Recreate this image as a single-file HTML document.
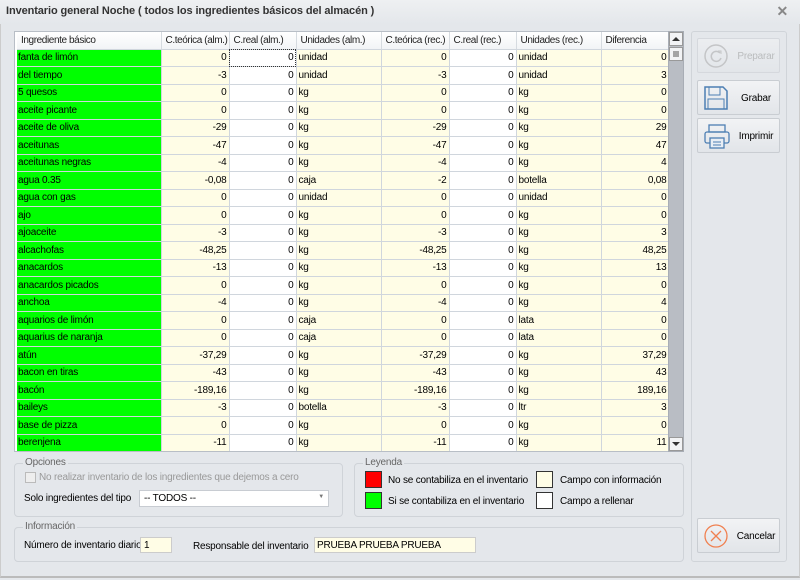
<!DOCTYPE html>
<html><head><meta charset="utf-8">
<style>
*{box-sizing:border-box;margin:0;padding:0}
body{width:800px;height:580px;overflow:hidden;background:#e4e7eb;font-family:"Liberation Sans",sans-serif;font-size:10px;letter-spacing:-0.2px;color:#000;position:relative}
.title{position:absolute;left:0;top:0;width:800px;height:24px;background:linear-gradient(#eef0f2,#e4e7eb);}
.title span{position:absolute;left:6px;top:5px;font-weight:bold;font-size:11px;color:#333;letter-spacing:-0.1px}
.title .x{position:absolute;right:12px;top:3px;font-size:14px;color:#888;font-weight:bold}
.win{position:absolute;left:0;top:24px;width:800px;height:554px;border-left:1px solid #ccc;border-right:1px solid #ccc;border-bottom:2px solid #bbb}
.grid{position:absolute;left:14px;top:31px;width:670px;height:421px;border:1px solid #b8bec6;background:#fff;overflow:hidden}
table{border-collapse:collapse;table-layout:fixed;position:absolute;left:2px;top:0;width:652px}
td,th{height:17.5px;border-right:1px solid #d0d6dd;border-bottom:1px solid #d0d6dd;padding:0 2px;white-space:nowrap;overflow:hidden;font-weight:normal;font-size:10px}
th{height:17px;background:linear-gradient(#fff,#f2f4f6);text-align:left;padding-left:4px;color:#222;border-right:1px solid #d6dbe0;letter-spacing:-0.4px}
td.g{background:#00ff00;padding-left:1px}
td.y{background:#fffde6}
td.w{background:#fff}
td.r{text-align:right}
.sb{position:absolute;left:668px;top:31px;width:16px;height:421px;background:#b9bdc4;border:1px solid #a8adb5}
.sb .a{position:absolute;left:0;width:14px;height:14px;background:#f2f3f5;border:1px solid #999}
.side{position:absolute;left:691px;top:31px;width:96px;height:531px;border:1px solid #d0d4d9;border-radius:3px}
.btn{position:absolute;left:697px;width:83px;height:35px;border:1px solid #c9cdd2;border-radius:2px;background:linear-gradient(#f2f3f5,#e2e5e9)}
.btn span{position:absolute;left:34px;width:48px;text-align:center;top:12px;font-size:10px}
.btn svg{position:absolute;left:5px;top:4px}
.grp{position:absolute;border:1px solid #cfd3d8;border-radius:4px}
.grp .lg{position:absolute;left:8px;top:-7px;background:#e4e7eb;padding:0 2px;color:#666}
.lbl{position:absolute;white-space:nowrap}
.box{position:absolute;width:17px;height:17px;border:1px solid #333}
</style></head><body>
<div class="title"><span>Inventario general Noche ( todos los ingredientes básicos del almacén )</span><div class="x">✕</div></div>
<div class="win"></div>
<div class="grid">
<table>
<colgroup><col style="width:144px"><col style="width:68px"><col style="width:67px"><col style="width:85px"><col style="width:68px"><col style="width:67px"><col style="width:85px"><col style="width:68px"></colgroup>
<tr><th>Ingrediente básico</th><th>C.teórica (alm.)</th><th>C.real (alm.)</th><th>Unidades (alm.)</th><th>C.teórica (rec.)</th><th>C.real (rec.)</th><th>Unidades (rec.)</th><th>Diferencia</th></tr>
<tr><td class="g">fanta de limón</td><td class="y r">0</td><td class="w r" style="outline:1px dotted #333;outline-offset:-1px">0</td><td class="y">unidad</td><td class="y r">0</td><td class="w r">0</td><td class="y">unidad</td><td class="y r">0</td></tr>
<tr><td class="g">del tiempo</td><td class="y r">-3</td><td class="w r">0</td><td class="y">unidad</td><td class="y r">-3</td><td class="w r">0</td><td class="y">unidad</td><td class="y r">3</td></tr>
<tr><td class="g">5 quesos</td><td class="y r">0</td><td class="w r">0</td><td class="y">kg</td><td class="y r">0</td><td class="w r">0</td><td class="y">kg</td><td class="y r">0</td></tr>
<tr><td class="g">aceite picante</td><td class="y r">0</td><td class="w r">0</td><td class="y">kg</td><td class="y r">0</td><td class="w r">0</td><td class="y">kg</td><td class="y r">0</td></tr>
<tr><td class="g">aceite de oliva</td><td class="y r">-29</td><td class="w r">0</td><td class="y">kg</td><td class="y r">-29</td><td class="w r">0</td><td class="y">kg</td><td class="y r">29</td></tr>
<tr><td class="g">aceitunas</td><td class="y r">-47</td><td class="w r">0</td><td class="y">kg</td><td class="y r">-47</td><td class="w r">0</td><td class="y">kg</td><td class="y r">47</td></tr>
<tr><td class="g">aceitunas negras</td><td class="y r">-4</td><td class="w r">0</td><td class="y">kg</td><td class="y r">-4</td><td class="w r">0</td><td class="y">kg</td><td class="y r">4</td></tr>
<tr><td class="g">agua 0.35</td><td class="y r">-0,08</td><td class="w r">0</td><td class="y">caja</td><td class="y r">-2</td><td class="w r">0</td><td class="y">botella</td><td class="y r">0,08</td></tr>
<tr><td class="g">agua con gas</td><td class="y r">0</td><td class="w r">0</td><td class="y">unidad</td><td class="y r">0</td><td class="w r">0</td><td class="y">unidad</td><td class="y r">0</td></tr>
<tr><td class="g">ajo</td><td class="y r">0</td><td class="w r">0</td><td class="y">kg</td><td class="y r">0</td><td class="w r">0</td><td class="y">kg</td><td class="y r">0</td></tr>
<tr><td class="g">ajoaceite</td><td class="y r">-3</td><td class="w r">0</td><td class="y">kg</td><td class="y r">-3</td><td class="w r">0</td><td class="y">kg</td><td class="y r">3</td></tr>
<tr><td class="g">alcachofas</td><td class="y r">-48,25</td><td class="w r">0</td><td class="y">kg</td><td class="y r">-48,25</td><td class="w r">0</td><td class="y">kg</td><td class="y r">48,25</td></tr>
<tr><td class="g">anacardos</td><td class="y r">-13</td><td class="w r">0</td><td class="y">kg</td><td class="y r">-13</td><td class="w r">0</td><td class="y">kg</td><td class="y r">13</td></tr>
<tr><td class="g">anacardos picados</td><td class="y r">0</td><td class="w r">0</td><td class="y">kg</td><td class="y r">0</td><td class="w r">0</td><td class="y">kg</td><td class="y r">0</td></tr>
<tr><td class="g">anchoa</td><td class="y r">-4</td><td class="w r">0</td><td class="y">kg</td><td class="y r">-4</td><td class="w r">0</td><td class="y">kg</td><td class="y r">4</td></tr>
<tr><td class="g">aquarios de limón</td><td class="y r">0</td><td class="w r">0</td><td class="y">caja</td><td class="y r">0</td><td class="w r">0</td><td class="y">lata</td><td class="y r">0</td></tr>
<tr><td class="g">aquarius de naranja</td><td class="y r">0</td><td class="w r">0</td><td class="y">caja</td><td class="y r">0</td><td class="w r">0</td><td class="y">lata</td><td class="y r">0</td></tr>
<tr><td class="g">atún</td><td class="y r">-37,29</td><td class="w r">0</td><td class="y">kg</td><td class="y r">-37,29</td><td class="w r">0</td><td class="y">kg</td><td class="y r">37,29</td></tr>
<tr><td class="g">bacon en tiras</td><td class="y r">-43</td><td class="w r">0</td><td class="y">kg</td><td class="y r">-43</td><td class="w r">0</td><td class="y">kg</td><td class="y r">43</td></tr>
<tr><td class="g">bacón</td><td class="y r">-189,16</td><td class="w r">0</td><td class="y">kg</td><td class="y r">-189,16</td><td class="w r">0</td><td class="y">kg</td><td class="y r">189,16</td></tr>
<tr><td class="g">baileys</td><td class="y r">-3</td><td class="w r">0</td><td class="y">botella</td><td class="y r">-3</td><td class="w r">0</td><td class="y">ltr</td><td class="y r">3</td></tr>
<tr><td class="g">base de pizza</td><td class="y r">0</td><td class="w r">0</td><td class="y">kg</td><td class="y r">0</td><td class="w r">0</td><td class="y">kg</td><td class="y r">0</td></tr>
<tr><td class="g">berenjena</td><td class="y r">-11</td><td class="w r">0</td><td class="y">kg</td><td class="y r">-11</td><td class="w r">0</td><td class="y">kg</td><td class="y r">11</td></tr>
</table>
</div>
<div class="sb">
<div class="a" style="top:0"><svg width="12" height="12"><path d="M2 8 L6 4 L10 8Z" fill="#333"/></svg></div>
<div class="a" style="top:15px"><svg width="12" height="12"><path d="M3 4h6M3 6h6M3 8h6" stroke="#555"/></svg></div>
<div class="a" style="bottom:0"><svg width="12" height="12"><path d="M2 4 L6 8 L10 4Z" fill="#333"/></svg></div>
</div>

<div class="side"></div>
<div class="btn" style="top:38px;opacity:.55"><svg width="26" height="26"><circle cx="13" cy="13" r="11" fill="none" stroke="#aaa" stroke-width="1.5"/><path d="M17 10a5 5 0 1 0 1 5" fill="none" stroke="#aaa" stroke-width="1.5"/><path d="M15 8h3v3" fill="none" stroke="#aaa"/></svg><span style="color:#999">Preparar</span></div>
<div class="btn" style="top:80px"><svg width="26" height="26"><path d="M2 2h18l4 4v18H2Z" fill="none" stroke="#4d7fb3" stroke-width="1.5"/><rect x="6" y="2" width="11" height="8" fill="none" stroke="#4d7fb3"/><rect x="5" y="14" width="16" height="10" fill="none" stroke="#4d7fb3"/></svg><span>Grabar</span></div>
<div class="btn" style="top:118px"><svg width="28" height="28"><rect x="6" y="2" width="16" height="7" fill="none" stroke="#4d7fb3" stroke-width="1.3"/><rect x="2" y="9" width="24" height="11" rx="2" fill="none" stroke="#4d7fb3" stroke-width="1.3"/><rect x="7" y="15" width="14" height="10" fill="#e8eef5" stroke="#4d7fb3" stroke-width="1.3"/><path d="M10 19h8M10 22h8" stroke="#4d7fb3"/></svg><span>Imprimir</span></div>
<div class="btn" style="top:518px"><svg width="26" height="26"><circle cx="13" cy="13" r="11" fill="none" stroke="#f08050" stroke-width="1.3"/><path d="M8 8l10 10M18 8l-10 10" stroke="#f08050" stroke-width="1.3"/></svg><span>Cancelar</span></div>

<div class="grp" style="left:14px;top:463px;width:329px;height:54px"><span class="lg">Opciones</span></div>
<div style="position:absolute;left:25px;top:472px;width:11px;height:11px;border:1px solid #bbb;background:#eee"></div>
<div class="lbl" style="left:39px;top:472px;color:#999">No realizar inventario de los ingredientes que dejemos a cero</div>
<div class="lbl" style="left:24px;top:493px">Solo ingredientes del tipo</div>
<div style="position:absolute;left:139px;top:490px;width:190px;height:17px;border:1px solid #c8ccd2;background:#fff"><span style="position:absolute;left:4px;top:2px">-- TODOS --</span><span style="position:absolute;right:4px;top:3px;font-size:6px;color:#777">▼</span></div>

<div class="grp" style="left:354px;top:463px;width:330px;height:54px"><span class="lg">Leyenda</span></div>
<div class="box" style="left:365px;top:471px;background:#ff0000"></div>
<div class="lbl" style="left:388px;top:475px">No se contabiliza en el inventario</div>
<div class="box" style="left:365px;top:492px;background:#00ff00"></div>
<div class="lbl" style="left:388px;top:496px">Si se contabiliza en el inventario</div>
<div class="box" style="left:536px;top:471px;background:#fffde6"></div>
<div class="lbl" style="left:560px;top:475px">Campo con información</div>
<div class="box" style="left:536px;top:492px;background:#fff"></div>
<div class="lbl" style="left:560px;top:496px">Campo a rellenar</div>

<div class="grp" style="left:14px;top:527px;width:670px;height:35px"><span class="lg">Información</span></div>
<div class="lbl" style="left:24px;top:540px">Número de inventario diario</div>
<div style="position:absolute;left:140px;top:537px;width:32px;height:16px;border:1px solid #ccc;background:#fffde6;padding:2px 3px">1</div>
<div class="lbl" style="left:193px;top:541px">Responsable del inventario</div>
<div style="position:absolute;left:314px;top:537px;width:162px;height:16px;border:1px solid #ccc;background:#fffde6;padding:2px 2px">PRUEBA PRUEBA PRUEBA</div>
</body></html>
